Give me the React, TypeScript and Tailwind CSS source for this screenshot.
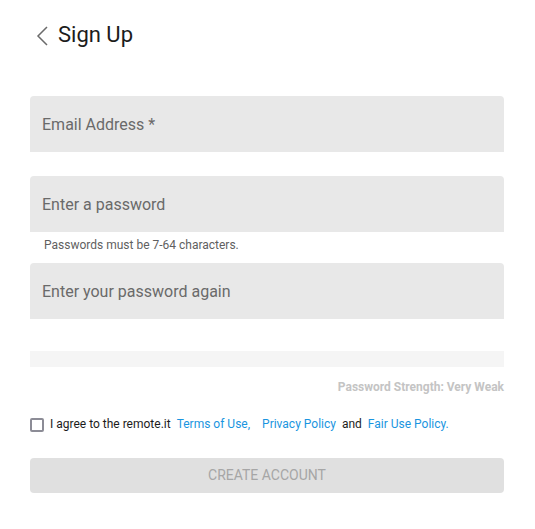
import React from "react";

export default function App() {
  return (
    <div className="w-[535px] h-[529px] bg-white pl-[30px] pr-[31px]" style={{ fontFamily: "Roboto, 'Liberation Sans', sans-serif" }}>
      <div className="h-[96px] pt-[22px]">
        <div className="flex items-center h-[26px]">
          <svg width="16" height="22" viewBox="0 0 16 22" className="ml-[5px] mt-[2px]">
            <path d="M12 2 L3 11 L12 20" fill="none" stroke="#6b6b6b" strokeWidth="1.5" />
          </svg>
          <span className="ml-[7px] text-[22px] text-[#1c1c1c] leading-none">Sign Up</span>
        </div>
      </div>
      <div className="h-[56px] bg-[#e8e8e8] rounded-t-[4px] flex items-center px-[12px] pt-[2px] text-[16px] text-[#6a6a6a]">
        Email Address *
      </div>
      <div className="h-[56px] mt-[24px] bg-[#e8e8e8] rounded-t-[4px] flex items-center px-[12px] text-[16px] text-[#6a6a6a] pt-[1px]">
        Enter a password
      </div>
      <div className="h-[31px] pl-[14px] pt-[6px] text-[12px] text-[#5f5f5f] leading-[14px]">
        Passwords must be 7-64 characters.
      </div>
      <div className="h-[56px] bg-[#e8e8e8] rounded-t-[4px] flex items-center px-[12px] pt-[2px] text-[16px] text-[#6a6a6a]">
        Enter your password again
      </div>
      <div className="h-[16px] mt-[32px] bg-[#f5f5f5]"></div>
      <div className="h-[14px] mt-[13px] text-right text-[12px] font-bold text-[#c4c4c4] leading-[14px]">
        Password Strength: Very Weak
      </div>
      <div className="flex items-center mt-[22px] h-[16px] text-[12px] leading-[14px]">
        <div className="w-[14px] h-[14px] border-[2px] border-[#8c8c96] rounded-[2px] mt-[2px]"></div>
        <span className="ml-[6px] text-[#1c1c1c]">I agree to the remote.it</span>
        <span className="ml-[6px] text-[#1a95e0]">Terms of Use,</span>
        <span className="ml-[12px] text-[#1a95e0]">Privacy Policy</span>
        <span className="ml-[6px] text-[#1c1c1c]">and</span>
        <span className="ml-[6px] text-[#1a95e0]">Fair Use Policy.</span>
      </div>
      <div className="h-[35px] mt-[26px] bg-[#e0e0e0] rounded-[4px] flex items-center justify-center text-[14px] text-[#a6a6a6] uppercase">
        Create account
      </div>
    </div>
  );
}
